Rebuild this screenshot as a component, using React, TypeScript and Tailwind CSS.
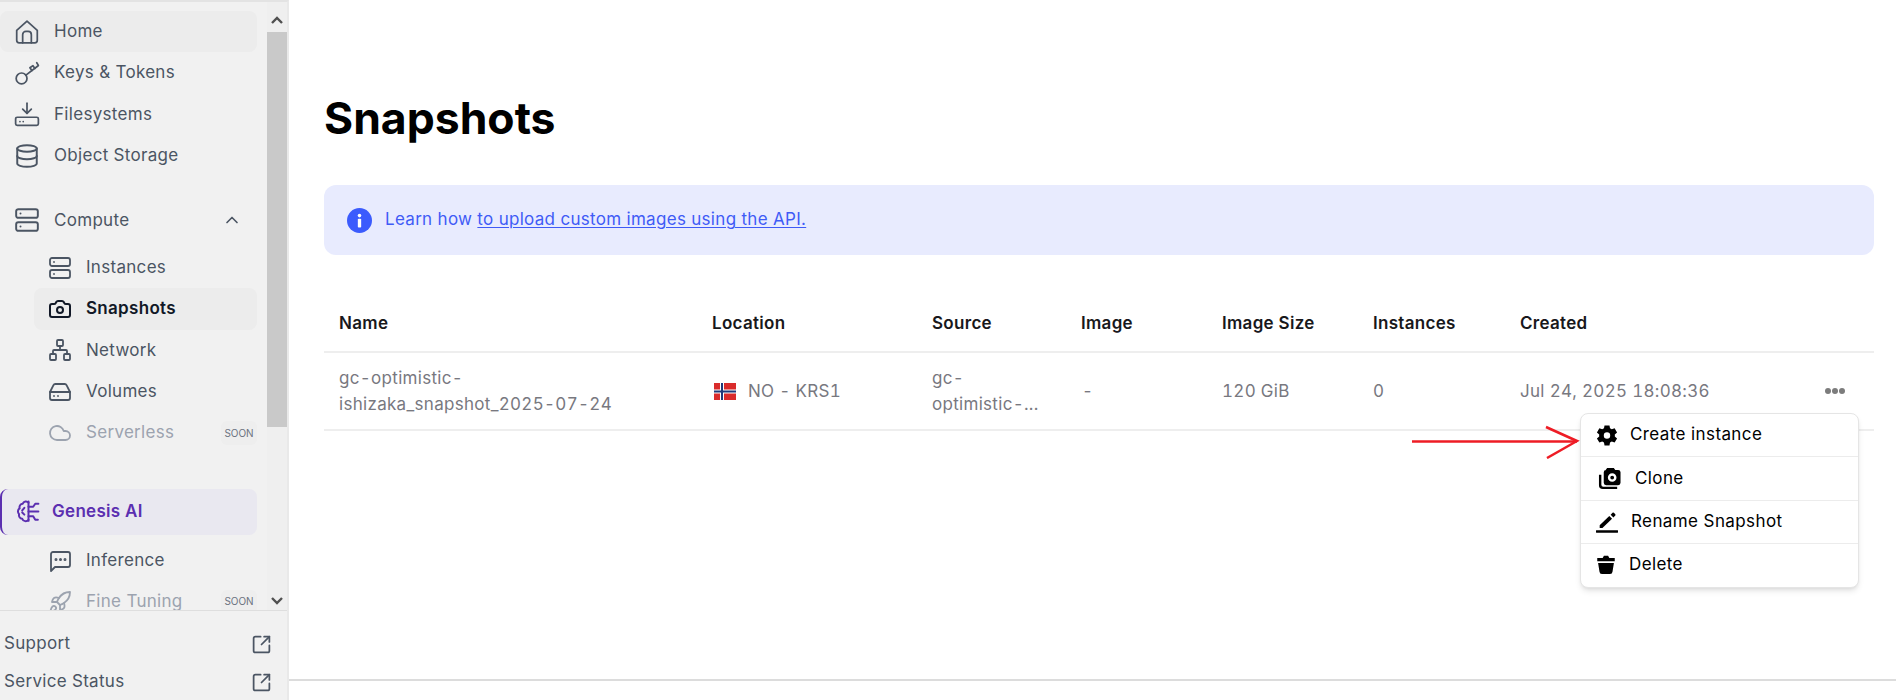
import React from "react";
import { ChevronUp, Database, Server, Camera, Network, HardDrive, Cloud, Rocket, SquareArrowOutUpRight } from "lucide-react";

const FONT = "font-['Inter','Liberation_Sans',sans-serif]";

type IP = { className?: string };
const S = ({ className, children, sw = 1.6 }: IP & { children: React.ReactNode; sw?: number }) => (
  <svg viewBox="0 0 24 24" fill="none" stroke="currentColor" strokeWidth={sw} strokeLinecap="round" strokeLinejoin="round" className={className}>
    {children}
  </svg>
);
const HomeI = (p: IP) => (
  <S {...p}>
    <path d="M2.500 10.500 12 2l9.500 8.500v9.200a2.300 2.300 0 0 1-2.300 2.300H4.800a2.300 2.300 0 0 1-2.300-2.300z" />
    <path d="M8 22v-7.500a3 3 0 0 1 3-3h2a3 3 0 0 1 3 3V22" />
  </S>
);
const KeyI = (p: IP) => (
  <S {...p}>
    <circle cx="7" cy="17" r="5" />
    <path d="M11 14 22 5.500" />
    <path d="m16.500 9.800-1.800-2.600 2.800-2 1.800 2.600" />
    <path d="m21 2.500 1.500 2.500" />
  </S>
);
const FsI = (p: IP) => (
  <S {...p}>
    <path d="M12 2v9" />
    <path d="m8 7.500 4 4 4-4" />
    <rect x="1.500" y="15" width="21" height="7.500" rx="1.500" />
    <path d="M5.500 19h.01M8.500 19h.01" />
  </S>
);
const BrainI = (p: IP) => (
  <S {...p} sw={1.900}>
    <path d="M12 3.500a3.200 3.200 0 0 0-5.500 1A3.500 3.500 0 0 0 3.500 9 3.500 3.500 0 0 0 3 14.500a3.500 3.500 0 0 0 3 4.500 3.500 3.500 0 0 0 6 1" />
    <path d="M12 2.500V21" />
    <path d="M12 7.500h4.500l2-3h3" />
    <path d="M12 12h9.500" />
    <path d="M12 16.500h4.500l2 3.500h2.500" />
    <path d="M8 8.500 6 11M8 15l-2-2" />
  </S>
);
const ChatI = (p: IP) => (
  <svg viewBox="0 0 24 24" fill="none" stroke="currentColor" strokeWidth={1.800} strokeLinejoin="round" className={p.className}>
    <path d="M3 22V5a2 2 0 0 1 2-2h15a2 2 0 0 1 2 2v11a2 2 0 0 1-2 2H7z" />
    <circle cx="8" cy="10.500" r=".6" fill="currentColor" />
    <circle cx="12.500" cy="10.500" r=".6" fill="currentColor" />
    <circle cx="17" cy="10.500" r=".6" fill="currentColor" />
  </svg>
);
const GearI = (p: IP) => (
  <svg viewBox="0 0 24 24" className={p.className} fill="currentColor">
    <path fillRule="evenodd" d="M14.700 1.500h-5.400l-.6 3.200a8 8 0 0 0-1.900 1.100L3.700 4.700 1 9.300l2.500 2.100a8 8 0 0 0 0 2.200L1 15.700l2.700 4.600 3.100-1.100a8 8 0 0 0 1.900 1.100l.6 3.200h5.400l.6-3.200a8 8 0 0 0 1.900-1.100l3.100 1.100 2.700-4.600-2.500-2.100a8 8 0 0 0 0-2.200L23 9.300l-2.700-4.600-3.100 1.100a8 8 0 0 0-1.900-1.100zM12 16a3.500 3.500 0 1 0 0-7 3.500 3.500 0 0 0 0 7z" />
  </svg>
);
const CloneI = (p: IP) => (
  <svg viewBox="0 0 24 24" className={p.className} fill="currentColor">
    <path fillRule="evenodd" d="M9.500 1h7l1.500 2h3a2.500 2.500 0 0 1 2.500 2.500v11a2.500 2.500 0 0 1-2.500 2.500H8.500A2.500 2.500 0 0 1 6 16.500v-11A2.500 2.500 0 0 1 8.500 3H8zM14.800 15.500a4.500 4.500 0 1 0 0-9 4.500 4.500 0 0 0 0 9zm0-2.500a2 2 0 1 0 0-4 2 2 0 0 0 0 4z" />
    <path d="M1 8h2.500v10.500A2 2 0 0 0 5.500 20.500H20V23H5a4 4 0 0 1-4-4z" />
  </svg>
);
const PenI = (p: IP) => (
  <svg viewBox="0 0 24 24" className={p.className} fill="currentColor">
    <path d="M4 15.500 14.500 5.500l3 3L7 18.500H4z" />
    <path d="M16 4l2-2a1 1 0 0 1 1.500 0l1.500 1.500a1 1 0 0 1 0 1.500l-2 2z" />
    <rect x="0" y="21" width="24" height="2.600" rx=".4" />
  </svg>
);
const TrashI = (p: IP) => (
  <svg viewBox="0 0 24 24" className={p.className} fill="currentColor">
    <path d="M8 3.500 9.500 1h5L16 3.500h6.500v4H1.500v-4z" />
    <path d="M2.500 9.500h19l-1.700 10.500a3 3 0 0 1-3 2.800H7.200a3 3 0 0 1-3-2.800z" />
  </svg>
);
const InfoI = (p: IP) => (
  <svg viewBox="0 0 24 24" className={p.className}>
    <circle cx="12" cy="12" r="12" fill="#3b5bfd" />
    <circle cx="12" cy="7.300" r="1.700" fill="#fff" />
    <rect x="10.400" y="10.300" width="3.200" height="8.400" rx=".8" fill="#fff" />
  </svg>
);

const Arrow = ({ up }: { up?: boolean }) => (
  <svg viewBox="0 0 12 8" className="h-[8px] w-[12px] text-[#505050]" fill="none" stroke="currentColor" strokeWidth={2.400}>
    <path d={up ? "M1 7l5-5 5 5" : "M1 1l5 5 5-5"} />
  </svg>
);

const Soon = () => (
  <span className="ml-auto flex h-[24px] w-[36px] shrink-0 items-center justify-center rounded-md bg-[#eeeeee] text-[10px] tracking-normal text-[#6b7280]">SOON</span>
);

const Top = ({ icon, label, className = "" }: { icon: React.ReactNode; label: string; className?: string }) => (
  <div className={`flex h-[41.400px] items-center pl-[14px] text-[17px] tracking-[0.3px] text-[#4b5563] ${className}`}>
    <span className="mr-[14px] flex w-[26px] justify-center">{icon}</span>
    {label}
  </div>
);
const Sub = ({ icon, label, active, muted, soon }: { icon: React.ReactNode; label: string; active?: boolean; muted?: boolean; soon?: boolean }) => (
  <div className={`ml-[34px] flex h-[41.400px] items-center rounded-lg pl-[14px] text-[17px] tracking-[0.3px] ${active ? "bg-[#ececec] font-semibold text-[#111827]" : muted ? "text-[#9ca3af]" : "text-[#4b5563]"}`}>
    <span className="mr-[14px] flex w-[24px] justify-center">{icon}</span>
    {label}
    {soon && <Soon />}
  </div>
);

const cols = "grid grid-cols-[373px_220px_149px_141px_151px_147px_1fr]";
const Menu = ({ icon, label, gap, h }: { icon: React.ReactNode; label: string; gap: string; h: string }) => (
  <div className={`flex items-center border-b border-[#ececec] pl-[15px] text-[17px] tracking-[0.4px] text-black last:border-b-0 ${gap} ${h}`}>
    {icon}
    {label}
  </div>
);

export default function App() {
  const ic = "h-[26px] w-[26px]";
  const sub = "h-[24px] w-[24px]";
  return (
    <div className={`relative flex h-[700px] w-[1896px] overflow-hidden bg-white ${FONT}`}>
      <aside className="flex h-full w-[289px] shrink-0 flex-col border-t-2 border-r-2 border-t-[#e3e3e3] border-r-[#e9e9e9] bg-[#f1f1f1]">
        <div className="flex h-[609px] shrink-0 border-b border-[#dedede]">
          <nav className="w-[267px] shrink-0 overflow-hidden pt-[9px] pr-[10px]">
            <Top className="rounded-lg bg-[#ececec]" icon={<HomeI className={ic} />} label="Home" />
            <Top icon={<KeyI className={ic} />} label="Keys & Tokens" />
            <Top icon={<FsI className={ic} />} label="Filesystems" />
            <Top icon={<Database className={ic} strokeWidth={1.800} />} label="Object Storage" />
            <div className="mt-[23px] flex h-[41.400px] items-center pl-[14px] text-[17px] tracking-[0.3px] text-[#4b5563]">
              <span className="mr-[14px] flex w-[26px] justify-center"><Server className={ic} strokeWidth={1.800} /></span>
              Compute
              <ChevronUp className="ml-auto mr-[15px] h-[20px] w-[20px]" strokeWidth={2} />
            </div>
            <div className="mt-[6px]">
              <Sub icon={<Server className={sub} strokeWidth={1.800} />} label="Instances" />
              <Sub active icon={<Camera className={sub} strokeWidth={2} />} label="Snapshots" />
              <Sub icon={<Network className={sub} strokeWidth={1.800} />} label="Network" />
              <Sub icon={<HardDrive className={sub} strokeWidth={1.800} />} label="Volumes" />
              <Sub muted soon icon={<Cloud className={sub} strokeWidth={1.800} />} label="Serverless" />
            </div>
            <div className="mt-[35px] flex h-[46px] items-center rounded-lg border-l-2 border-[#5b2fb0] bg-[#e9e8f0] pl-[14px] text-[17px] font-semibold tracking-[0.3px] text-[#5b2fb0]">
              <BrainI className="mr-[11px] h-[25px] w-[25px]" />
              Genesis AI
            </div>
            <div className="mt-[5px]">
              <Sub icon={<ChatI className={sub} />} label="Inference" />
              <Sub muted soon icon={<Rocket className={sub} strokeWidth={1.800} />} label="Fine Tuning" />
            </div>
          </nav>
          <div className="flex w-[20px] shrink-0 flex-col bg-[#efefef]">
            <div className="flex h-[30px] items-center justify-center pt-[6px]"><Arrow up /></div>
            <div className="h-[395px] bg-[#c9c9c9]" />
            <div className="flex-1" />
            <div className="flex h-[18px] items-center justify-center"><Arrow /></div>
          </div>
        </div>
        <div className="flex-1 px-[4px] pt-[14px] text-[17px] tracking-[0.3px] text-[#4b5563]">
          <div className="flex h-[38px] items-center pr-[11px]">
            Support
            <SquareArrowOutUpRight className="ml-auto h-[21px] w-[21px]" strokeWidth={2} />
          </div>
          <div className="flex h-[38px] items-center pr-[11px]">
            Service Status
            <SquareArrowOutUpRight className="ml-auto h-[21px] w-[21px]" strokeWidth={2} />
          </div>
        </div>
      </aside>

      <main className="flex h-[681px] flex-1 flex-col border-b-2 border-[#dcdcdc] pl-[35px] pr-[22px] pt-[88px]">
        <h1 className="text-[44.500px] font-bold leading-[60px] text-black">Snapshots</h1>
        <div className="mt-[37px] flex h-[70px] items-center rounded-xl bg-[#e8ebfe] pl-[23px] text-[17px] tracking-[0.3px] text-[#3f5bf6]">
          <InfoI className="mr-[13px] h-[25px] w-[25px]" />
          Learn how&nbsp;<span className="underline underline-offset-2">to upload custom images using the API.</span>
        </div>
        <div className={`${cols} mt-[43px] h-[55px] items-center border-b-2 border-[#eeeeee] pb-[1px] text-[17px] font-semibold tracking-[0.3px] text-[#18181b]`}>
          {["Name", "Location", "Source", "Image", "Image Size", "Instances", "Created"].map((h) => (
            <div key={h} className="pl-[15px]">{h}</div>
          ))}
        </div>
        <div className={`${cols} h-[78px] items-center border-b-2 border-[#eeeeee] text-[17px] leading-[26px] tracking-[0.3px] text-[#78787f] tabular-nums`}>
          <div className="pl-[15px]">gc-optimistic-<br />ishizaka_snapshot_2025-07-24</div>
          <div className="flex items-center pl-[17px]">
            <svg viewBox="0 0 22 17" className="mr-[12px] h-[17px] w-[22px]">
              <rect width="22" height="17" fill="#d92b2b" />
              <rect x="6" width="4" height="17" fill="#fff" />
              <rect y="6.500" width="22" height="4" fill="#fff" />
              <rect x="7" width="2" height="17" fill="#1f3a7a" />
              <rect y="7.500" width="22" height="2" fill="#1f3a7a" />
            </svg>
            NO - KRS1
          </div>
          <div className="pl-[15px]">gc-<br />optimistic-...</div>
          <div className="pl-[16px]">-</div>
          <div className="pl-[15px]">120 GiB</div>
          <div className="pl-[15px]">0</div>
          <div className="flex items-center justify-between pl-[15px] pr-[29px]">
            <span>Jul 24, 2025 18:08:36</span>
            <span className="flex gap-[1px]">
              <i className="h-[6px] w-[6px] rounded-full bg-[#7c7c7c]" />
              <i className="h-[6px] w-[6px] rounded-full bg-[#7c7c7c]" />
              <i className="h-[6px] w-[6px] rounded-full bg-[#7c7c7c]" />
            </span>
          </div>
        </div>
      </main>

      <svg className="absolute left-[1412px] top-[425px] h-[34px] w-[170px]" viewBox="0 0 170 34" fill="none" stroke="#ee1c25" strokeWidth={2.500}>
        <path d="M0 16.500H165" />
        <path d="M134 2 165 16 135 33" />
      </svg>

      <div className="absolute left-[1580px] top-[413px] w-[279px] overflow-hidden rounded-lg border border-[#e5e5e5] bg-white pb-[1px] shadow-md">
        <Menu h="h-[43px]" gap="gap-[12px]" icon={<GearI className="h-[22px] w-[22px] shrink-0" />} label="Create instance" />
        <Menu h="h-[44px]" gap="gap-[14px]" icon={<CloneI className="ml-[2px] h-[23px] w-[23px] shrink-0" />} label="Clone" />
        <Menu h="h-[43px]" gap="gap-[13px]" icon={<PenI className="h-[22px] w-[22px] shrink-0" />} label="Rename Snapshot" />
        <Menu h="h-[42px]" gap="gap-[13px]" icon={<TrashI className="h-[20px] w-[20px] shrink-0" />} label="Delete" />
      </div>
    </div>
  );
}
